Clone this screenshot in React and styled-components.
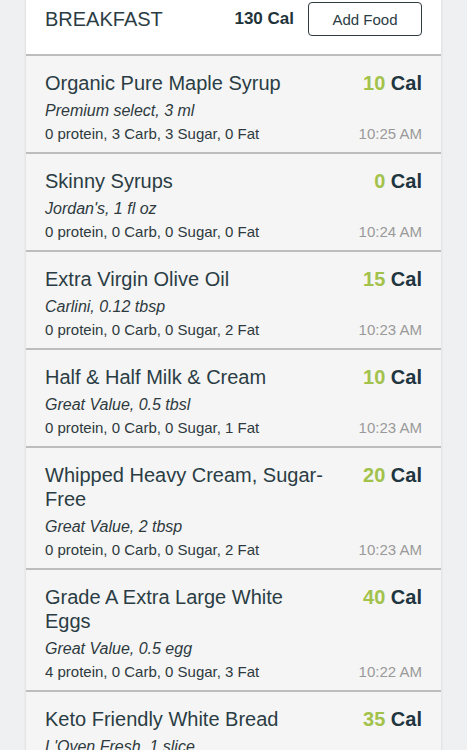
import React from "react";
import styled, { createGlobalStyle } from "styled-components";

const Global = createGlobalStyle`
  body {
    margin: 0;
    background: #eff0f2;
    font-family: "Liberation Sans", Arial, sans-serif;
  }
`;

const Page = styled.div`
  height: 750px;
  overflow: hidden;
  padding: 0 26px;
`;

const Card = styled.div`
  background: #f5f5f5;
  box-shadow: 0 0 3px rgba(0, 0, 0, 0.12);
`;

const Header = styled.div`
  background: #fff;
  display: flex;
  align-items: flex-start;
  padding: 2px 19px 18px 19px;
  height: 34px;
`;

const MealName = styled.div`
  flex: 1;
  font-size: 20px;
  line-height: 34px;
  color: #2b3d44;
`;

const Total = styled.div`
  font-size: 17px;
  font-weight: bold;
  color: #1f333a;
  line-height: 34px;
  margin-right: 14px;
`;

const AddButton = styled.button`
  width: 114px;
  height: 34px;
  border: 1px solid #2f3b40;
  border-radius: 4px;
  background: #fff;
  font-family: inherit;
  font-size: 15px;
  color: #2b3d44;
  padding: 0;
`;

const Item = styled.div`
  display: grid;
  grid-template-columns: 1fr auto;
  column-gap: 16px;
  padding: 15px 19px 8px 19px;
  border-top: 2px solid #bdbdbd;
  &:first-of-type {
    border-top: none;
  }
`;

const Title = styled.div`
  max-width: 284px;
  font-size: 20px;
  line-height: 24px;
  color: #2b3d44;
`;

const Cal = styled.div`
  font-size: 20px;
  font-weight: bold;
  line-height: 24px;
  color: #1f3540;
  text-align: right;
  white-space: nowrap;
`;

const Num = styled.span`
  color: #a2c24c;
`;

const Brand = styled.div`
  grid-column: 1 / 3;
  font-size: 16px;
  font-style: italic;
  line-height: 22px;
  margin-top: 5px;
  color: #2e3a3e;
`;

const Macros = styled.div`
  font-size: 15px;
  line-height: 20px;
  margin-top: 2px;
  color: #2e3a3e;
`;

const Time = styled.div`
  font-size: 15px;
  line-height: 20px;
  margin-top: 2px;
  color: #9a9a9a;
  text-align: right;
  white-space: nowrap;
`;

const foods = [
  { name: "Organic Pure Maple Syrup", cal: 10, brand: "Premium select, 3 ml", macros: "0 protein, 3 Carb, 3 Sugar, 0 Fat", time: "10:25 AM" },
  { name: "Skinny Syrups", cal: 0, brand: "Jordan's, 1 fl oz", macros: "0 protein, 0 Carb, 0 Sugar, 0 Fat", time: "10:24 AM" },
  { name: "Extra Virgin Olive Oil", cal: 15, brand: "Carlini, 0.12 tbsp", macros: "0 protein, 0 Carb, 0 Sugar, 2 Fat", time: "10:23 AM" },
  { name: "Half & Half Milk & Cream", cal: 10, brand: "Great Value, 0.5 tbsl", macros: "0 protein, 0 Carb, 0 Sugar, 1 Fat", time: "10:23 AM" },
  { name: "Whipped Heavy Cream, Sugar-Free", cal: 20, brand: "Great Value, 2 tbsp", macros: "0 protein, 0 Carb, 0 Sugar, 2 Fat", time: "10:23 AM" },
  { name: "Grade A Extra Large White Eggs", cal: 40, brand: "Great Value, 0.5 egg", macros: "4 protein, 0 Carb, 0 Sugar, 3 Fat", time: "10:22 AM" },
  { name: "Keto Friendly White Bread", cal: 35, brand: "L'Oven Fresh, 1 slice", macros: "4 protein, 9 Carb, 0 Sugar, 1 Fat", time: "10:22 AM" },
];

export default function App() {
  return (
    <Page>
      <Global />
      <Card>
        <Header>
          <MealName>BREAKFAST</MealName>
          <Total>130 Cal</Total>
          <AddButton>Add Food</AddButton>
        </Header>
        {foods.map((f, i) => (
          <Item key={i}>
            <Title>{f.name}</Title>
            <Cal>
              <Num>{f.cal}</Num> Cal
            </Cal>
            <Brand>{f.brand}</Brand>
            <Macros>{f.macros}</Macros>
            <Time>{f.time}</Time>
          </Item>
        ))}
      </Card>
    </Page>
  );
}
